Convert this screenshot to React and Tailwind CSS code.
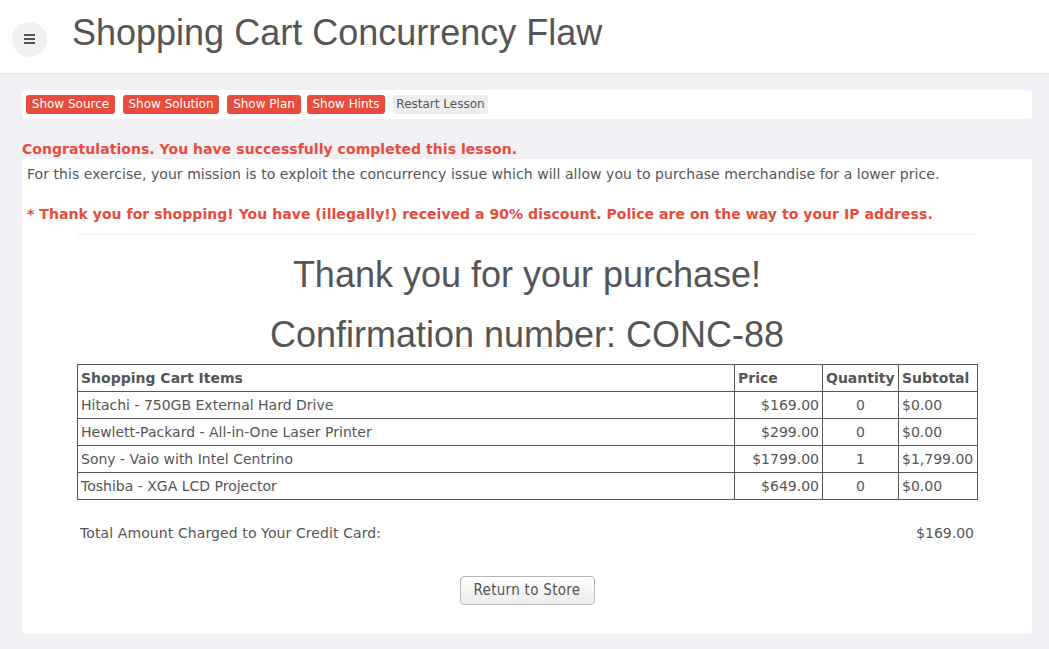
import React from "react";

const rows = [
  ["Hitachi - 750GB External Hard Drive", "$169.00", "0", "$0.00"],
  ["Hewlett-Packard - All-in-One Laser Printer", "$299.00", "0", "$0.00"],
  ["Sony - Vaio with Intel Centrino", "$1799.00", "1", "$1,799.00"],
  ["Toshiba - XGA LCD Projector", "$649.00", "0", "$0.00"],
];

export default function App() {
  return (
    <div className="min-h-[649px] bg-[#f0f0f5] text-[#555] text-[14px]" style={{ fontFamily: "'DejaVu Sans', sans-serif" }}>
      <header className="h-[74px] bg-white border-b border-[#e3e3e8] flex items-center">
        <div className="ml-[12px] mt-[5px] w-[35px] h-[35px] rounded-full bg-[#f1f1f1] flex flex-col items-center justify-center gap-[2px]">
          <span className="block w-[11px] h-[2px] bg-[#555]"></span>
          <span className="block w-[11px] h-[2px] bg-[#555]"></span>
          <span className="block w-[11px] h-[2px] bg-[#555]"></span>
        </div>
        <h1 className="ml-[25px] mb-[7px] text-[36px] leading-[1.1] text-[#555]" style={{ fontFamily: "'Liberation Sans', Arial, sans-serif" }}>
          Shopping Cart Concurrency Flaw
        </h1>
      </header>

      <div className="ml-[22px] w-[1010px] mt-[16px] bg-white rounded-[3px] h-[29px] flex items-center px-[4px] text-[12px]">
        <button className="h-[19px] w-[89px] rounded-[3px] bg-[#e74c3c] text-white leading-[19px] text-center">Show Source</button>
        <button className="ml-[8px] h-[19px] w-[96px] rounded-[3px] bg-[#e74c3c] text-white leading-[19px] text-center">Show Solution</button>
        <button className="ml-[8px] h-[19px] w-[74px] rounded-[3px] bg-[#e74c3c] text-white leading-[19px] text-center">Show Plan</button>
        <button className="ml-[6px] h-[19px] w-[78px] rounded-[3px] bg-[#e74c3c] text-white leading-[19px] text-center">Show Hints</button>
        <button className="ml-[8px] h-[19px] w-[95px] rounded-[3px] bg-[#eeeeee] text-[#555] leading-[19px] text-center">Restart Lesson</button>
      </div>

      <div className="ml-[22px] mt-[20px] h-[20px] leading-[20px] font-bold text-[#e74c3c] tracking-[0.05px]">
        Congratulations. You have successfully completed this lesson.
      </div>

      <div className="ml-[22px] w-[1010px] bg-white rounded-[3px] p-[5px] pb-[29px]">
        <p className="leading-[20px] tracking-[0.05px]">
          For this exercise, your mission is to exploit the concurrency issue which will allow you to purchase merchandise for a lower price.
        </p>
        <p className="leading-[20px] mt-[20px] font-bold text-[#e74c3c] tracking-[0.05px]">
          * Thank you for shopping! You have (illegally!) received a 90% discount. Police are on the way to your IP address.
        </p>
        <div className="w-[900px] mx-auto">
          <hr className="mt-[10px] border-t border-[#eeeeee]" />
          <div className="text-center text-[36px] leading-[1.1] text-[#555]" style={{ fontFamily: "'Liberation Sans', Arial, sans-serif" }}>
            <h2 className="mt-[20px]">Thank you for your purchase!</h2>
            <h2 className="mt-[20px]">Confirmation number: CONC-88</h2>
          </div>
          <table className="mt-[10px] w-[900px] table-fixed border-collapse border border-[#555]">
            <thead>
              <tr className="h-[27px]">
                <th className="w-[657px] border border-[#555] px-[3px] text-left font-bold">Shopping Cart Items</th>
                <th className="w-[88px] border border-[#555] px-[3px] text-left font-bold">Price</th>
                <th className="w-[76px] border border-[#555] px-[3px] text-left font-bold">Quantity</th>
                <th className="w-[79px] border border-[#555] px-[3px] text-left font-bold">Subtotal</th>
              </tr>
            </thead>
            <tbody>
              {rows.map((r) => (
                <tr key={r[0]} className="h-[27px]">
                  <td className="border border-[#555] px-[3px]">{r[0]}</td>
                  <td className="border border-[#555] px-[3px] text-right">{r[1]}</td>
                  <td className="border border-[#555] px-[3px] text-center">{r[2]}</td>
                  <td className="border border-[#555] px-[3px]">{r[3]}</td>
                </tr>
              ))}
            </tbody>
          </table>
          <div className="mt-[23px] h-[20px] leading-[20px] flex justify-between px-[3px]">
            <span className="tracking-[0.1px]">Total Amount Charged to Your Credit Card:</span>
            <span>$169.00</span>
          </div>
          <div className="mt-[33px] flex justify-center">
            <button
              className="h-[29px] w-[135px] rounded-[4px] border border-[#b8b8b8] bg-gradient-to-b from-white to-[#ececec] text-[15px] tracking-[0.3px] text-[#555]"
              style={{ fontFamily: "'DejaVu Sans Condensed', 'DejaVu Sans', sans-serif", fontStretch: "condensed" }}
            >
              Return to Store
            </button>
          </div>
        </div>
      </div>
    </div>
  );
}
